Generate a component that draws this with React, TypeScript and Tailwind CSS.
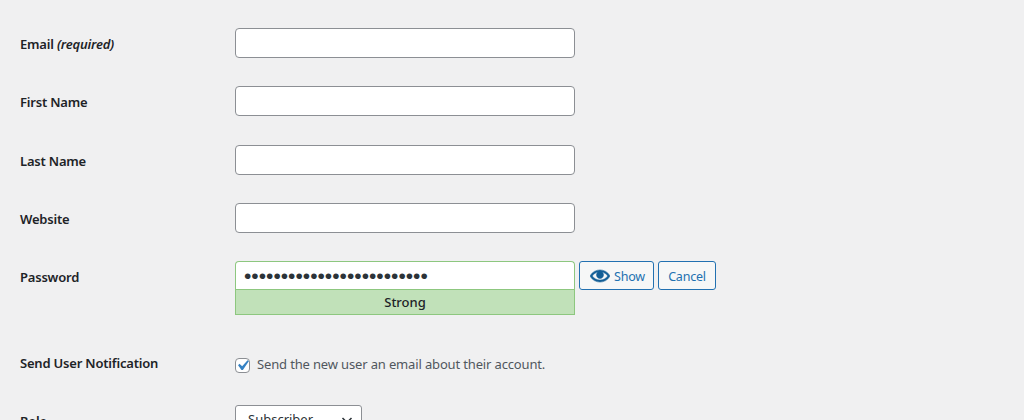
const font = { fontFamily: '"Noto Sans", sans-serif' }

function Row({ label, children, className, labelClassName = "pt-[3px]" }: { label: React.ReactNode; children: React.ReactNode; className?: string; labelClassName?: string }) {
  return (
    <div className={`flex items-center ${className ?? ""}`}>
      <div className={`w-[235px] shrink-0 pl-5 text-[13px] font-semibold tracking-[-0.2px] text-[#1d2327] ${labelClassName}`}>{label}</div>
      {children}
    </div>
  )
}

function TextInput() {
  return <input type="text" className="h-[30px] w-[340px] rounded-[4px] border border-[#8c8f94] bg-white px-2 outline-none" />
}

function EyeIcon() {
  return (
    <svg viewBox="0 0 20 20" className="h-5 w-5 fill-[#135e96] stroke-[#135e96] stroke-[0.5]">
      <path d="M19.7 9.4C17.7 6 14 3.9 10 3.9S2.3 6 .3 9.4L0 10l.3.6c2 3.4 5.7 5.5 9.7 5.5s7.7-2.1 9.7-5.5l.3-.6-.3-.6zM10 14.1c-3.1 0-6-1.6-7.7-4.1C3.6 8 5.7 6.6 8 6.1c-.9.6-1.5 1.7-1.5 2.9 0 1.9 1.6 3.5 3.5 3.5s3.5-1.6 3.5-3.5c0-1.2-.6-2.3-1.5-2.9 2.3.5 4.4 1.9 5.7 3.9-1.7 2.5-4.6 4.1-7.7 4.1z" />
    </svg>
  )
}

export default function App() {
  return (
    <div className="h-[420px] w-[1024px] overflow-hidden bg-[#f0f0f1] pt-7" style={font}>
      <Row className="mb-[28px] h-[30px]" label={<>Email <i className="text-[13px]">(required)</i></>}>
        <TextInput />
      </Row>
      <Row className="mb-[29px] h-[30px]" label="First Name">
        <TextInput />
      </Row>
      <Row className="mb-[28px] h-[30px]" label="Last Name">
        <TextInput />
      </Row>
      <Row className="mb-[28px] h-[30px]" label="Website">
        <TextInput />
      </Row>

      {/* Password */}
      <div className="flex">
        <div className="flex h-[30px] w-[235px] shrink-0 items-center pl-5 pt-[3px] text-[13px] font-semibold tracking-[-0.2px] text-[#1d2327]">Password</div>
        <div className="w-[340px]">
          <input
            type="password"
            readOnly
            value="aaaaaaaaaaaaaaaaaaaaaaaaa"
            className="block h-[28px] w-full rounded-t-[4px] border border-b-0 border-[#8dc77f] bg-white px-2 text-[21px] text-[#2c3338] outline-none"
            style={{ fontFamily: '"Liberation Sans", sans-serif' }}
          />
          <div className="flex h-[26px] items-center justify-center border border-[#8dc77f] bg-[#c1e1b9] pt-[2px] text-[13px] font-medium text-[#1d2327]">
            Strong
          </div>
        </div>
        <div className="ml-1 flex h-[29px] gap-1">
          <button className="flex w-[75px] items-center gap-1 rounded-[3px] border border-[#2271b1] bg-[#f6f7f7] pl-[10px] text-[12.5px] tracking-[-0.2px] text-[#2271b1]">
            <EyeIcon />
            <span className="pt-1">Show</span>
          </button>
          <button className="w-[58px] rounded-[3px] border border-[#2271b1] bg-[#f6f7f7] pt-1 text-[12.5px] tracking-[-0.2px] text-[#2271b1]">Cancel</button>
        </div>
      </div>

      <Row className="mt-[40px] h-5" labelClassName="pb-[2px]" label="Send User Notification">
        <span className="flex h-[15px] w-[15px] items-center justify-center rounded-[4px] border border-[#8c8f94] bg-white">
          <svg viewBox="0 0 20 20" className="h-[21px] w-[21px] shrink-0 fill-[#3582c4]">
            <path d="M14.83 4.89l1.34.94-5.81 8.38H9.02L5.78 9.67l1.34-1.25 2.57 2.4z" />
          </svg>
        </span>
        <span className="ml-[7px] text-[13px] tracking-[-0.15px] text-[#50575e]">Send the new user an email about their account.</span>
      </Row>

      <div className="mt-[30px] flex">
        <div className="flex h-[30px] w-[235px] shrink-0 items-center pl-5 pt-[3px] text-[13px] font-semibold tracking-[-0.2px] text-[#1d2327]">Role</div>
        <div className="flex h-[30px] w-[127px] items-center justify-between rounded-[3px] border border-[#8c8f94] bg-white pl-3 pr-[6px] text-[13px] text-[#2c3338]">
          Subscriber
          <svg viewBox="0 0 16 16" className="h-4 w-4 fill-none stroke-[#2c3338] stroke-[1.5]">
            <path d="M3.5 6l4.5 4.5L12.5 6" />
          </svg>
        </div>
      </div>
    </div>
  )
}
